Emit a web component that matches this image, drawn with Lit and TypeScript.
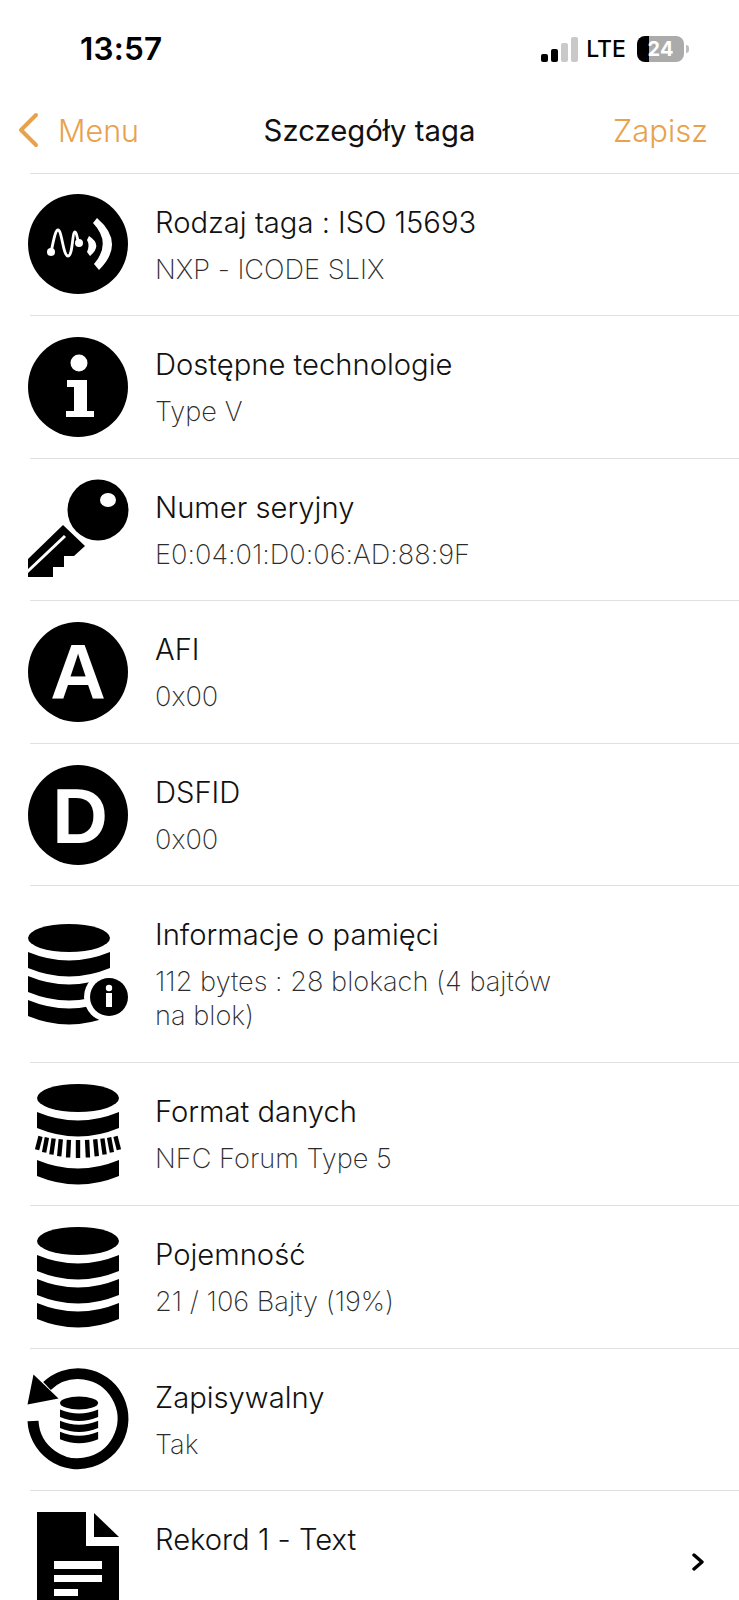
import { LitElement, html, css, svg } from "lit";
import { customElement } from "lit/decorators.js";

const band = (x0: number, x1: number, y: number, h: number, sag: number) => {
  const c = (x0 + x1) / 2;
  const s = sag * 2;
  return `M${x0} ${y}Q${c} ${y + s} ${x1} ${y}V${y + h}Q${c} ${y + h + s} ${x0} ${y + h}Z`;
};

const dbTop = svg`<ellipse cx="41" cy="14" rx="41" ry="14"></ellipse>`;
const dbFull = svg`${dbTop}
  <path d=${band(0, 82, 28, 16, 8.5)}></path>
  <path d=${band(0, 82, 52, 16, 8.5)}></path>
  <path d=${band(0, 82, 76, 16, 8.5)}></path>`;

const ticks = [1.8, 8.5, 15.5, 23, 31.5, 41, 50.5, 59, 66.5, 73.5, 80.2];
const dbTicks = svg`${dbTop}
  <path d=${band(0, 82, 28, 16, 8.5)}></path>
  ${ticks.map((x) => {
    const d = (x - 41) / 41;
    const sag = 1 - d * d;
    return svg`<line x1=${x - d * 1.8} y1=${52 + sag * 4} x2=${x + d * 1.8} y2=${65 + sag * 9} stroke="#000" stroke-width="4.4"></line>`;
  })}
  <path d=${band(0, 82, 76, 16, 8.5)}></path>`;

const icons: Record<string, unknown> = {
  wave: svg`<circle cx="50" cy="50" r="50"></circle>
    <path d="M23 58C25 50 27 36 30 36C34 36 35 62 40 62C45 62 44 38 47 38C49 38 49 46 51 49" fill="none" stroke="#fff" stroke-width="2.800" stroke-linecap="round"></path>
    <circle cx="23" cy="58" r="4" fill="#fff"></circle><circle cx="51" cy="49" r="4" fill="#fff"></circle>
    <path d="M61 42Q75 51 62 62L59 58Q62 51 59 46Z" fill="#fff"></path>
    <path d="M69 24Q98 49 71 76L66 70Q84 49 65 29Z" fill="#fff"></path>`,
  info: svg`<circle cx="50" cy="50" r="50"></circle><circle cx="51" cy="26" r="8.500" fill="#fff"></circle>
    <path d="M39 43H59V74H66V80H38V74H46V50H39Z" fill="#fff"></path>`,
  key: svg`<circle cx="70" cy="31" r="30.500"></circle><ellipse cx="80" cy="21" rx="8" ry="7" fill="#fff"></ellipse>
    <path d="M0 80L35 46L57 67L46 77H36V88H25V98H0Z"></path>
    <path d="M-1 93L37 57" stroke="#fff" stroke-width="3" fill="none"></path>`,
  letterA: svg`<circle cx="50" cy="50" r="50"></circle><text x="50" y="77" class="glyph" text-anchor="middle">A</text>`,
  letterD: svg`<circle cx="50" cy="50" r="50"></circle><text x="52" y="78" class="glyph" text-anchor="middle">D</text>`,
  dbInfo: svg`${dbFull}
    <circle cx="81" cy="73" r="25" fill="#fff"></circle><circle cx="81" cy="73" r="19"></circle>
    <circle cx="81" cy="64" r="3.200" fill="#fff"></circle><rect x="78" y="69" width="6" height="14" fill="#fff"></rect>`,
  dbTicks: svg`<g transform="translate(9 0)">${dbTicks}</g>`,
  db: svg`<g transform="translate(9 0)">${dbFull}</g>`,
  restore: svg`<path d="M5 52A45 45 0 1 0 19 17" fill="none" stroke="#000" stroke-width="11"></path>
    <path d="M5.500 5.500L-0.500 35.500L30.500 29.500Z"></path>
    <g transform="translate(32 27.500) scale(.465)">${dbFull}</g>`,
  doc: svg`<g transform="translate(9 0)"><path d="M0 0H49V34H82V104H0Z"></path><path d="M57 1L82 25H57Z"></path>
    <path d="M17 49H65V57H17ZM17 63H65V70H17ZM17 77H41V84H17Z" fill="#fff"></path></g>`,
};

type Row = { icon: string; title: string; sub?: string; link?: boolean };
const rows: Row[] = [
  { icon: "wave", title: "Rodzaj taga : ISO 15693", sub: "NXP - ICODE SLIX" },
  { icon: "info", title: "Dostępne technologie", sub: "Type V" },
  { icon: "key", title: "Numer seryjny", sub: "E0:04:01:D0:06:AD:88:9F" },
  { icon: "letterA", title: "AFI", sub: "0x00" },
  { icon: "letterD", title: "DSFID", sub: "0x00" },
  { icon: "dbInfo", title: "Informacje o pamięci", sub: "112 bytes : 28 blokach (4 bajtów na blok)" },
  { icon: "dbTicks", title: "Format danych", sub: "NFC Forum Type 5" },
  { icon: "db", title: "Pojemność", sub: "21 / 106 Bajty (19%)" },
  { icon: "restore", title: "Zapisywalny", sub: "Tak" },
  { icon: "doc", title: "Rekord 1 - Text", link: true },
];

@customElement("app-root")
export class AppRoot extends LitElement {
  static styles = css`
    :host {
      display: block;
      width: 739px;
      height: 1600px;
      overflow: hidden;
      background: #fff;
      font-family: Inter, "Liberation Sans", sans-serif;
      font-feature-settings: "calt" 0;
      color: #111;
    }
    .status {
      height: 96px;
      box-sizing: border-box;
      padding: 31px 50px 0 80px;
      display: flex;
      justify-content: space-between;
      align-items: flex-start;
    }
    .time {
      font-size: 31.500px;
      line-height: 36px;
      font-weight: 600;
      color: #000;
      letter-spacing: 0.2px;
    }
    .indicators {
      display: flex;
      align-items: center;
      height: 36px;
    }
    .signal {
      display: flex;
      align-items: flex-end;
      gap: 3px;
      height: 25px;
      margin-right: 8px;
    }
    .signal i {
      width: 7px;
      border-radius: 2px;
      background: #c9c9c9;
    }
    .signal i:nth-child(1) { height: 8px; background: #000; }
    .signal i:nth-child(2) { height: 13px; background: #000; }
    .signal i:nth-child(3) { height: 19px; }
    .signal i:nth-child(4) { height: 25px; }
    .lte {
      font-size: 23px;
      font-weight: 500;
      color: #000;
      margin-right: 11px;
    }
    .battery {
      width: 47px;
      height: 26px;
      border-radius: 8px;
      background: linear-gradient(90deg, #000 0 12px, #ababab 12px);
      color: #fff;
      font-size: 20px;
      font-weight: 700;
      line-height: 26px;
      text-align: center;
      margin-right: 2px;
    }
    .nub {
      width: 3px;
      height: 8px;
      border-radius: 0 3px 3px 0;
      background: #bdbdbd;
    }
    .nav {
      height: 76.500px;
      box-sizing: border-box;
      padding: 0 31px 8px 17px;
      display: grid;
      grid-template-columns: 1fr auto 1fr;
      align-items: center;
      font-size: 30.500px;
      font-weight: 300;
    }
    .back {
      display: flex;
      align-items: center;
      gap: 19px;
      color: #e8a24c;
    }
    .back svg { width: 22px; height: 36px; display: block; }
    .heading {
      font-size: 29.300px;
      font-weight: 400;
      color: #111;
      position: relative;
      left: 7px;
    }
    .save { justify-self: end; color: #e8a24c; font-size: 31px; }
    .sep {
      height: 1px;
      margin-left: 30px;
      background: #e0e0e0;
    }
    .row {
      height: 141.600px;
      display: flex;
      align-items: center;
      padding-left: 28px;
      position: relative;
    }
    .row.tall { height: 176px; }
    .icon {
      width: 100px;
      height: 100px;
      flex: none;
      display: block;
      overflow: visible;
    }
    .glyph {
      font-family: "Liberation Sans", Arial, sans-serif;
      font-weight: 700;
      font-size: 77px;
      fill: #fff;
    }
    .text {
      margin-left: 27px;
      width: 411px;
      align-self: flex-start;
      padding-top: 29px;
    }
    .title {
      font-size: 29.200px;
      line-height: 40px;
      font-weight: 300;
      color: #111;
      white-space: nowrap;
    }
    .sub {
      margin-top: 10px;
      font-size: 27.200px;
      line-height: 34px;
      font-weight: 200;
      color: #2c2c2c;
    }
    .chev {
      position: absolute;
      left: 691px;
      top: 62px;
      width: 14px;
      height: 18px;
    }
  `;

  render() {
    return html`
      <div class="status">
        <div class="time">13:57</div>
        <div class="indicators">
          <div class="signal"><i></i><i></i><i></i><i></i></div>
          <div class="lte">LTE</div>
          <div class="battery">24</div>
          <div class="nub"></div>
        </div>
      </div>
      <div class="nav">
        <div class="back">
          <svg viewBox="0 0 22 36"><path d="M19 3L4 18L19 33" fill="none" stroke="#e8a24c" stroke-width="4" stroke-linecap="round" stroke-linejoin="round"></path></svg>
          <span>Menu</span>
        </div>
        <div class="heading">Szczegóły taga</div>
        <div class="save">Zapisz</div>
      </div>
      ${rows.map(
        (r) => html`
          <div class="sep"></div>
          <div class="row ${r.icon === "dbInfo" ? "tall" : ""}">
            <svg class="icon" viewBox="0 0 100 100">${icons[r.icon]}</svg>
            <div class="text">
              <div class="title">${r.title}</div>
              ${r.sub ? html`<div class="sub">${r.sub}</div>` : null}
            </div>
            ${r.link
              ? html`<svg class="chev" viewBox="0 0 14 18"><path d="M3 2L11 9L3 16" fill="none" stroke="#000" stroke-width="3.400" stroke-linecap="round" stroke-linejoin="round"></path></svg>`
              : null}
          </div>
        `
      )}
    `;
  }
}
